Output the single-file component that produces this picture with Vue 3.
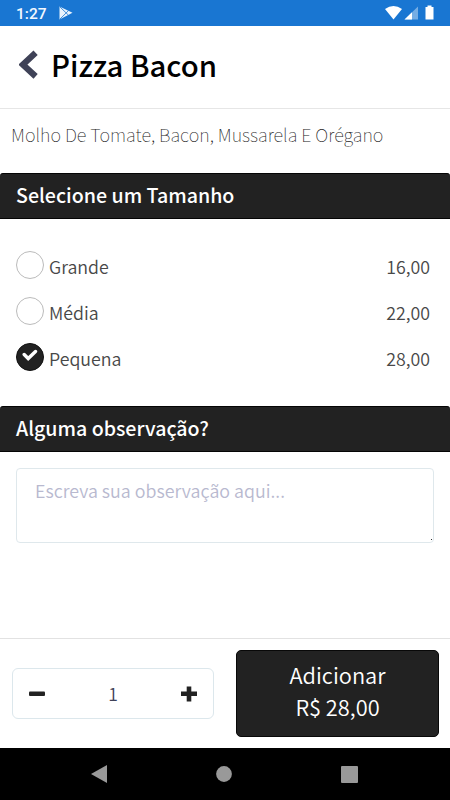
<script setup>
import { ref } from 'vue'

const sizes = [
  { name: 'Grande', price: '16,00' },
  { name: 'Média', price: '22,00' },
  { name: 'Pequena', price: '28,00' },
]
const selected = ref('Pequena')
const quantity = ref(1)
const note = ref('')
</script>

<template>
  <main class="screen">
    <div class="status">
      <span class="clock">1:27</span>
      <svg class="play" width="14" height="14" viewBox="0 0 14 14">
        <path d="M0.500 0.500 13.500 6.800 0.500 13.500Z" fill="#eaf3fc" />
        <path d="M1 1 9.500 9.200M1 13 9.500 4.600" stroke="#1976d2" stroke-width="0.8" />
      </svg>
      <svg class="signals" width="50" height="16" viewBox="0 0 50 16">
        <path d="M0 4Q8.500-2 17 4L8.500 14.500Z" fill="#fff" />
        <path d="M33 1.500V14.500H19.500Z" fill="#75ade4" />
        <path d="M27 7.300V14.500H19.500Z" fill="#fff" />
        <path d="M42.500 .5h4v1.500h2V14.500h-8V2h2Z" fill="#fff" />
      </svg>
    </div>

    <header class="header">
      <svg class="back" width="20" height="30" viewBox="0 0 20 30">
        <path d="M16.600 2.800 3.800 14.600 16.600 26.400" fill="none" stroke="#3f4257" stroke-width="6.200" />
      </svg>
      <h1>Pizza Bacon</h1>
    </header>

    <p class="description">Molho De Tomate, Bacon, Mussarela E Orégano</p>

    <h2 class="bar">Selecione um Tamanho</h2>
    <div class="options">
      <div v-for="s in sizes" :key="s.name" class="option" @click="selected = s.name">
        <span class="radio" :class="{ checked: selected === s.name }">
          <svg v-if="selected === s.name" width="16" height="13" viewBox="0 0 16 13">
            <path d="M2.200 5.500 6.200 9.500 13.500 2.500" fill="none" stroke="#fff" stroke-width="3.400" stroke-linecap="round" />
          </svg>
        </span>
        <span class="name">{{ s.name }}</span>
        <span class="price">{{ s.price }}</span>
      </div>
    </div>

    <h2 class="bar question">Alguma observação?</h2>
    <div class="note">
      <textarea v-model="note" placeholder="Escreva sua observação aqui..."></textarea>
      <span class="grip"></span>
    </div>

    <footer class="footer">
      <div class="stepper">
        <button @click="quantity = Math.max(1, quantity - 1)">
          <svg width="16" height="16" viewBox="0 0 16 16"><rect y="5.500" width="16" height="4.600" rx="1" fill="#222" /></svg>
        </button>
        <span class="quantity">{{ quantity }}</span>
        <button @click="quantity++">
          <svg width="16" height="16" viewBox="0 0 16 16"><path d="M5.700 .5h4.600V5.600H16v4.500h-5.700V15.500H5.700V10.100H0V5.600h5.700Z" fill="#222" /></svg>
        </button>
      </div>
      <button class="add"><span>Adicionar</span><span>R$ 28,00</span></button>
    </footer>

    <nav class="nav">
      <svg width="16" height="18" viewBox="0 0 16 18"><path d="M16 0V18L0 9Z" fill="#999" /></svg>
      <svg width="16" height="16" viewBox="0 0 16 16"><circle cx="8" cy="8" r="7.900" fill="#999" /></svg>
      <svg width="17" height="17" viewBox="0 0 17 17"><rect width="17" height="17" rx="1" fill="#999" /></svg>
    </nav>
  </main>
</template>

<style>
body {
  background: #fff;
}
</style>

<style scoped>
* {
  box-sizing: border-box;
}
.screen {
  width: 450px;
  height: 800px;
  display: flex;
  flex-direction: column;
  overflow: hidden;
  background: #fff;
  font-family: "Noto Sans CJK SC", sans-serif;
  color: #444;
}
h1, h2, p {
  margin: 0;
}
button {
  padding: 0;
  border: 0;
  background: none;
  font: inherit;
}
svg {
  display: block;
  flex: none;
}
.status {
  height: 26px;
  display: flex;
  align-items: center;
  padding: 0 15px;
  background: #1976d2;
}
.clock {
  width: 44px;
  padding: 2px 0 0 1px;
  font: 500 15.5px/26px Roboto, sans-serif;
  color: #f2f8ff;
}
.signals {
  margin-left: auto;
}
.header {
  height: 83px;
  display: flex;
  align-items: center;
  padding-left: 19px;
  border-bottom: 1px solid #e6e6e6;
}
.back {
  margin-bottom: 4px;
}
h1 {
  margin: 0 0 6px 12px;
  font-size: 29.3px;
  line-height: 40px;
  font-weight: 500;
  color: #000;
}
.description {
  height: 64px;
  padding: 11px 0 0 11px;
  font-size: 18.05px;
  line-height: 28px;
  font-weight: 100;
  color: #222;
  white-space: nowrap;
}
.bar {
  height: 46px;
  padding-left: 16px;
  border: 1px solid #050505;
  border-width: 1px 0;
  border-radius: 3px 3px 0 0;
  background: #222;
  font-size: 19.6px;
  line-height: 42px;
  font-weight: 500;
  color: #fff;
}
.options {
  height: 187px;
  padding: 23px 20px 0 16px;
}
.option {
  height: 46px;
  display: flex;
  align-items: center;
}
.radio {
  width: 28px;
  height: 28px;
  display: flex;
  align-items: center;
  justify-content: center;
  border: 1px solid #bbb;
  border-radius: 50%;
}
.radio.checked {
  background: #222;
  border-color: #111;
}
.radio svg {
  margin-bottom: 3px;
}
.name,
.price {
  padding-top: 2px;
  font-size: 17.8px;
  font-weight: 350;
  color: #484848;
}
.name {
  margin-left: 5px;
}
.price {
  margin-left: auto;
}
.note {
  position: relative;
  height: 186px;
  padding: 16px;
}
textarea {
  display: block;
  width: 418px;
  height: 75px;
  padding: 7px 18px;
  resize: none;
  outline: 0;
  border: 1px solid #dfe8ec;
  border-radius: 4px;
  font: 350 17.85px/28px "Noto Sans CJK SC", sans-serif;
}
textarea::placeholder {
  color: #b8b9cf;
}
.grip {
  position: absolute;
  left: 431px;
  top: 87px;
  width: 1px;
  height: 1px;
  background: #333;
}
.footer {
  height: 110px;
  display: flex;
  align-items: center;
  justify-content: space-between;
  padding: 0 11px 0 12px;
  border-top: 1px solid #e2e2e2;
}
.stepper {
  width: 202px;
  height: 51px;
  display: flex;
  align-items: center;
  justify-content: space-between;
  padding: 0 16px;
  border: 1px solid #dce7ec;
  border-radius: 6px;
}
.quantity {
  font-size: 17.5px;
  font-weight: 350;
  color: #3f4257;
}
.add {
  width: 203px;
  height: 87px;
  display: flex;
  flex-direction: column;
  align-items: center;
  justify-content: center;
  padding-bottom: 5px;
  border: 1px solid #080808;
  border-radius: 5px;
  background: #222;
  color: #fff;
  font-size: 21.8px;
  font-weight: 350;
  line-height: 32px;
}
.nav {
  height: 52px;
  display: flex;
  align-items: center;
  justify-content: space-between;
  padding: 0 92px 0 91px;
  background: #000;
}
</style>
